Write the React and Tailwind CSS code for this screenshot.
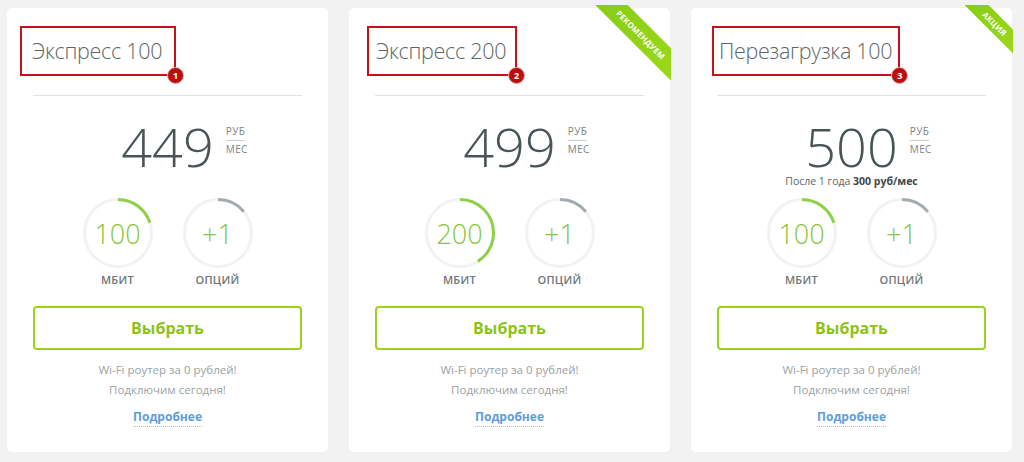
const plans = [
  { id: 1, title: "Экспресс 100", price: 449, speed: 100, speedArc: 0.2, optArc: 0.14, box: "-ml-[13px] pl-[10px] pr-[12px]" },
  {
    id: 2,
    title: "Экспресс 200",
    price: 499,
    speed: 200,
    speedArc: 0.41,
    optArc: 0.14,
    ribbon: "big",
    box: "-ml-[8px] pl-[7px] pr-[9px]",
  },
  {
    id: 3,
    title: "Перезагрузка 100",
    price: 500,
    speed: 100,
    speedArc: 0.2,
    optArc: 0.14,
    ribbon: "small",
    note: true,
    box: "-ml-[5px] pl-[5px] pr-[6px]",
  },
];

const C = 2 * Math.PI * 33.5;

function Ring({ value, arc, color, label }) {
  return (
    <div className="flex w-[70px] flex-col items-center">
      <div className="relative h-[70px] w-[70px]">
        <svg width="70" height="70" viewBox="0 0 70 70" className="absolute inset-0 -rotate-90">
          <circle cx="35" cy="35" r="33.5" fill="none" stroke="#f1f2f2" strokeWidth="3" />
          <circle
            cx="35"
            cy="35"
            r="33.5"
            fill="none"
            stroke={color}
            strokeWidth="3"
            strokeDasharray={`${arc * C} ${C}`}
          />
        </svg>
        <div className="absolute inset-0 flex items-center justify-center text-[27px] font-light leading-none text-[#84c73a]">
          {value}
        </div>
      </div>
      <div className="mt-[5px] text-[11px] font-semibold uppercase leading-[14px] tracking-[0.3px] text-[#6d7679]">
        {label}
      </div>
    </div>
  );
}

function Ribbon({ kind }) {
  if (kind === "big") {
    return (
      <div className="pointer-events-none absolute right-[-1px] top-[-3px] h-[80px] w-[77px] overflow-hidden">
        <div className="absolute left-[-13px] top-[18px] flex h-[23px] w-[120px] rotate-45 items-center justify-center bg-gradient-to-r from-[#84cc16] to-[#9ed91a] text-[8px] font-bold leading-none tracking-[0.2px] text-white">
          РЕКОМЕНДУЕМ
        </div>
      </div>
    );
  }
  return (
    <div className="pointer-events-none absolute right-[-1px] top-[-3px] h-[50px] w-[48px] overflow-hidden">
      <div className="absolute left-[-10px] top-[10px] flex h-[17px] w-[80px] rotate-45 items-center justify-center bg-gradient-to-r from-[#84cc16] to-[#9ed91a] text-[8px] font-bold leading-none tracking-[0.3px] text-white">
        АКЦИЯ
      </div>
    </div>
  );
}

function PlanCard({ plan }) {
  return (
    <div className="relative flex h-[444px] w-[321px] flex-col rounded-[5px] bg-white px-[26px] pt-[18px]">
      {plan.ribbon && <Ribbon kind={plan.ribbon} />}

      {/* title with red review frame */}
      <div className="flex">
        <div className={`relative flex h-[50px] items-center border-2 border-[#c4141b] ${plan.box}`}>
          <span className="text-[21.5px] font-light leading-none tracking-[-0.3px] text-[#5d6668]">{plan.title}</span>
          <span className="absolute bottom-[-10px] right-[-10px] flex h-[17px] w-[17px] items-center justify-center rounded-full border border-[#e9b0b0] bg-[#b80f0f] text-[9px] font-bold leading-none text-white">
            {plan.id}
          </span>
        </div>
      </div>

      <div className="mt-[19px] h-px bg-[#dfe2e3]" />

      <div className="mt-[23px] flex justify-center">
        <div className="relative text-[54px] font-light leading-[54px] text-[#4a5457]">
          {plan.price}
          <div className="absolute left-full top-[6px] ml-[12px] flex flex-col items-start text-[10px] font-normal leading-[12px] tracking-[0.4px] text-[#7a8487]">
            <span className="border-b border-[#c9cecf] pb-[3px]">РУБ</span>
            <span className="mt-[2px]">МЕС</span>
          </div>
        </div>
      </div>

      <div className="flex h-[16px] items-center justify-center text-[10.5px] leading-[16px] text-[#5d6668]">
        {plan.note && (
          <span>
            После 1 года <b className="font-bold text-[#3e4749]">300 руб/мес</b>
          </span>
        )}
      </div>

      <div className="mt-[9px] flex justify-center gap-[30px]">
        <Ring value={plan.speed} arc={plan.speedArc} color="#8fd04a" label="Мбит" />
        <Ring value="+1" arc={plan.optArc} color="#a2acaf" label="Опций" />
      </div>

      <button className="mt-[19px] flex h-[44px] w-full items-center justify-center rounded-[4px] border-2 border-[#9cd21e] text-[16px] font-bold text-[#8bc416]">
        Выбрать
      </button>

      <div className="mt-[10px] text-center text-[11.5px] leading-[20px] text-[#9aa2a5]">
        <p>Wi-Fi роутер за 0 рублей!</p>
        <p>Подключим сегодня!</p>
      </div>

      <div className="mt-[8px] flex justify-center">
        <a className="border-b border-dotted border-[#9fc3e8] text-[12px] font-bold leading-[18px] text-[#5d9ddc]">
          Подробнее
        </a>
      </div>
    </div>
  );
}

export default function App() {
  return (
    <div className="h-[462px] w-[1024px] overflow-hidden bg-[#f2f2f2] pl-[7px] pt-[8px] font-['Open_Sans',sans-serif]">
      <div className="flex gap-[21px]">
        {plans.map((p) => (
          <PlanCard key={p.id} plan={p} />
        ))}
      </div>
    </div>
  );
}
